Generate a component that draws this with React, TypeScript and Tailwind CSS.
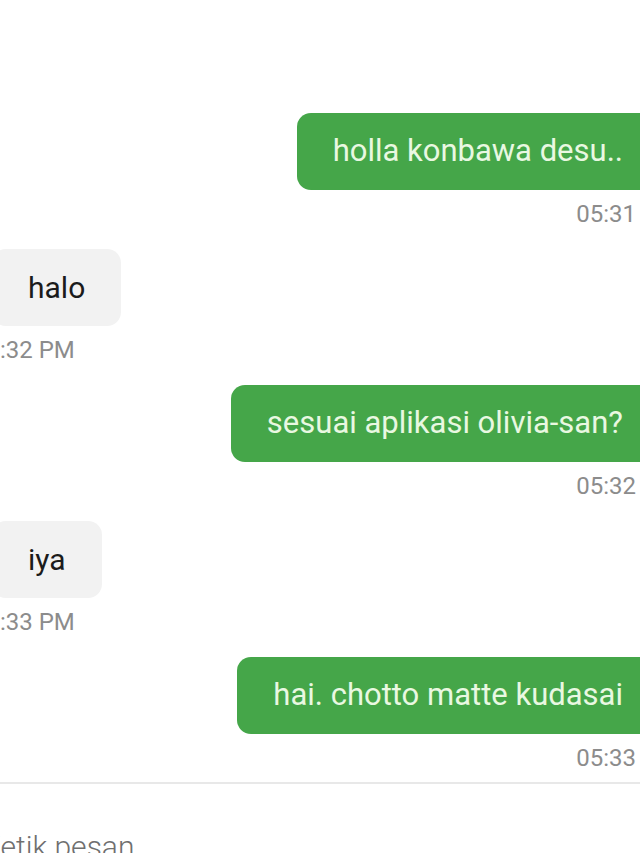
type Message = {
  id: number
  text: string
  time: string
  mine: boolean
}

const MESSAGES: Message[] = [
  { id: 1, text: 'holla konbawa desu..', time: '05:31 PM', mine: true },
  { id: 2, text: 'halo', time: '05:32 PM', mine: false },
  { id: 3, text: 'sesuai aplikasi olivia-san?', time: '05:32 PM', mine: true },
  { id: 4, text: 'iya', time: '05:33 PM', mine: false },
  { id: 5, text: 'hai. chotto matte kudasai', time: '05:33 PM', mine: true },
]

function ChatRow({ msg }: { msg: Message }) {
  if (msg.mine) {
    return (
      <div className="flex flex-col items-end mb-[21px] mr-[-38px]">
        <div className="h-[77px] px-9 mr-[19px] flex items-center rounded-[14px] bg-[#45a649] text-[#e9f8e1] text-[31px] whitespace-nowrap">
          {msg.text}
        </div>
        <span className="mt-[10px] text-[24px] leading-[28px] text-[#8c8c8c] whitespace-nowrap">
          {msg.time}
        </span>
      </div>
    )
  }

  return (
    <div className="flex flex-col items-start mb-[21px] ml-[-27px]">
      <div className="h-[77px] px-9 ml-[19px] flex items-center rounded-[14px] bg-[#f2f2f2] text-[#1b1b1b] text-[30px] whitespace-nowrap">
        {msg.text}
      </div>
      <span className="mt-[10px] text-[24px] leading-[28px] text-[#8c8c8c] whitespace-nowrap">
        {msg.time}
      </span>
    </div>
  )
}

export default function App() {
  return (
    <div className="h-[853px] w-[640px] overflow-hidden bg-white font-['Roboto','Liberation_Sans',sans-serif]">
      <div className="flex flex-col pt-[113px]">
        {MESSAGES.map((m) => (
          <ChatRow key={m.id} msg={m} />
        ))}
      </div>

      {/* kolom input */}
      <div className="border-t-2 border-[#e8e8e8] mt-[-11px]">
        <div className="pt-[40px] ml-[-18px] text-[30px] font-light text-[#6f6f6f] whitespace-nowrap">
          Ketik pesan...
        </div>
      </div>
    </div>
  )
}
